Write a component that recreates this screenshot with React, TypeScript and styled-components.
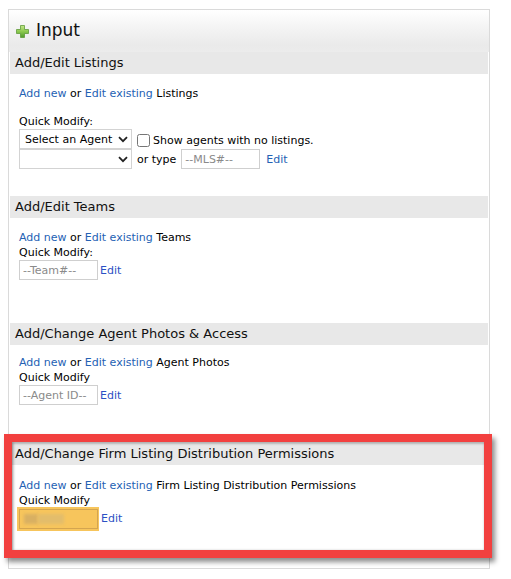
import styled, { createGlobalStyle } from 'styled-components';

const GlobalStyle = createGlobalStyle`
  html, body {
    margin: 0;
    padding: 0;
    background: #ffffff;
  }

  body {
    font-family: 'DejaVu Sans', Verdana, sans-serif;
    font-size: 11px;
    color: #000;
  }
`;

const PlusIcon: React.FC = () => (
  <svg width="13" height="13" viewBox="0 0 13 13">
    <defs>
      <linearGradient id="plusFill" x1="0" y1="0" x2="0" y2="1">
        <stop offset="0" stopColor="#c4e88a" />
        <stop offset="0.5" stopColor="#8cc94f" />
        <stop offset="1" stopColor="#4f9a2c" />
      </linearGradient>
    </defs>
    <path
      d="M4.5 0.5h4v4h4v4h-4v4h-4v-4h-4v-4h4z"
      fill="url(#plusFill)"
      stroke="#5f9b3a"
      strokeWidth="0.8"
    />
  </svg>
);

const App: React.FC = () => {
  return (
    <>
      <GlobalStyle />
      <Page>
        <Panel>
          <TitleBar>
            <PlusIcon />
            <TitleText>Input</TitleText>
          </TitleBar>

          <Section $bottom={27}>
            <SectionHeader>Add/Edit Listings</SectionHeader>
            <SectionBody>
              <Line $gap={13}>
                <Link href="#">Add new</Link> or <Link href="#">Edit existing</Link> Listings
              </Line>
              <Line>Quick Modify:</Line>
              <Row $gap={5}>
                <SelectBox>
                  <Select defaultValue="agent">
                    <option value="agent">Select an Agent</option>
                  </Select>
                  <Chevron />
                </SelectBox>
                <CheckLabel>
                  <input type="checkbox" />
                  Show agents with no listings.
                </CheckLabel>
              </Row>
              <Row $gap={5}>
                <SelectBox>
                  <Select defaultValue="">
                    <option value=""></option>
                  </Select>
                  <Chevron />
                </SelectBox>
                <span>or type</span>
                <TextInput placeholder="--MLS#--" />
                <EditLink href="#" $gap={1}>Edit</EditLink>
              </Row>
            </SectionBody>
          </Section>

          <Section $bottom={43}>
            <SectionHeader>Add/Edit Teams</SectionHeader>
            <SectionBody>
              <Line>
                <Link href="#">Add new</Link> or <Link href="#">Edit existing</Link> Teams
              </Line>
              <Line>Quick Modify:</Line>
              <Row>
                <TextInput placeholder="--Team#--" />
                <EditLink href="#" $strong>Edit</EditLink>
              </Row>
            </SectionBody>
          </Section>

          <Section $bottom={38}>
            <SectionHeader>Add/Change Agent Photos &amp; Access</SectionHeader>
            <SectionBody $top={10}>
              <Line>
                <Link href="#">Add new</Link> or <Link href="#">Edit existing</Link> Agent Photos
              </Line>
              <Line>Quick Modify</Line>
              <Row>
                <TextInput placeholder="--Agent ID--" />
                <EditLink href="#" $strong>Edit</EditLink>
              </Row>
            </SectionBody>
          </Section>

          <Section $bottom={40} $flagged>
            <Callout />
            <SectionHeader>Add/Change Firm Listing Distribution Permissions</SectionHeader>
            <SectionBody $top={13}>
              <Line>
                <Link href="#">Add new</Link> or <Link href="#">Edit existing</Link> Firm Listing
                Distribution Permissions
              </Line>
              <Line>Quick Modify</Line>
              <Row>
                <Redacted>
                  <RedactedField>
                    <Smudge $width={14} $tone="#d9b062" />
                    <Smudge $width={26} $tone="#e3bd6b" />
                  </RedactedField>
                </Redacted>
                <EditLink href="#" $strong>Edit</EditLink>
              </Row>
            </SectionBody>
          </Section>
        </Panel>
      </Page>
    </>
  );
};

const Chevron: React.FC = () => (
  <ChevronMark width="10" height="7" viewBox="0 0 10 7">
    <path d="M1 1.2l4 4 4-4" fill="none" stroke="#222" strokeWidth="1.8" />
  </ChevronMark>
);

const Page = styled.div`
  padding: 9px 0 0 8px;
`;

const Panel = styled.div`
  width: 482px;
  border: 1px solid #dadada;
  box-sizing: border-box;
`;

const TitleBar = styled.div`
  height: 42px;
  display: flex;
  align-items: center;
  gap: 7px;
  padding: 0 0 0 7px;
  box-sizing: border-box;
  background: linear-gradient(to bottom, #ffffff 0%, #f3f3f3 45%, #eaeaea 85%, #ececec 100%);
`;

const TitleText = styled.span`
  font-size: 17px;
  color: #111;
  margin-top: -2px;
`;

const Section = styled.div<{ $bottom: number; $flagged?: boolean }>`
  position: relative;
  padding-bottom: ${(p) => p.$bottom}px;
`;

const SectionHeader = styled.div`
  margin: 0 1px;
  height: 22px;
  line-height: 22px;
  padding-left: 5px;
  background: #e8e8e8;
  font-size: 13px;
  color: #111;
`;

const SectionBody = styled.div<{ $top?: number }>`
  padding: ${(p) => p.$top ?? 12}px 0 0 10px;
`;

const Line = styled.div<{ $gap?: number }>`
  line-height: 15px;
  margin-bottom: ${(p) => p.$gap ?? 0}px;
  white-space: nowrap;
`;

const Link = styled.a`
  color: #2461b4;
  text-decoration: none;
`;

const EditLink = styled.a<{ $gap?: number; $strong?: boolean }>`
  color: ${(p) => (p.$strong ? '#2c50c4' : '#2461b4')};
  text-decoration: none;
  margin-left: ${(p) => p.$gap ?? 2}px;
`;

const Row = styled.div<{ $gap?: number }>`
  display: flex;
  align-items: center;
  height: 20px;
  gap: ${(p) => p.$gap ?? 0}px;

  &:first-of-type {
    margin-top: 1px;
  }
`;

const SelectBox = styled.div`
  position: relative;
  width: 113px;
  height: 20px;
`;

const Select = styled.select`
  appearance: none;
  width: 100%;
  height: 100%;
  margin: 0;
  padding: 0 0 0 5px;
  border: 1px solid #d3d3d3;
  border-radius: 0;
  background: #fff;
  font-family: 'DejaVu Sans', Verdana, sans-serif;
  font-size: 11px;
  color: #000;
`;

const ChevronMark = styled.svg`
  position: absolute;
  right: 4px;
  top: 7px;
  pointer-events: none;
`;

const CheckLabel = styled.label`
  display: flex;
  align-items: center;
  gap: 3px;
  margin-top: 3px;
  white-space: nowrap;

  input {
    width: 13px;
    height: 13px;
    margin: 0;
  }
`;

const TextInput = styled.input`
  width: 79px;
  height: 20px;
  box-sizing: border-box;
  margin: 0;
  padding: 0 3px;
  border: 1px solid #cfcfcf;
  border-radius: 0;
  font-family: 'DejaVu Sans', Verdana, sans-serif;
  font-size: 11px;

  &::placeholder {
    color: #8a8a8a;
  }
`;

const Redacted = styled.span`
  display: inline-flex;
  margin: 2px 0 0 -2px;
  padding: 2px 1px 2px 2px;
  background: #f7c55c;
`;

const RedactedField = styled.span`
  display: flex;
  align-items: center;
  width: 79px;
  height: 20px;
  box-sizing: border-box;
  padding-left: 4px;
  border: 1px solid #d4a550;
`;

const Smudge = styled.span<{ $width: number; $tone: string }>`
  width: ${(p) => p.$width}px;
  height: 10px;
  background: ${(p) => p.$tone};
  filter: blur(1.5px);
`;

const Callout = styled.div`
  position: absolute;
  top: -9px;
  left: -5px;
  width: 488px;
  height: 124px;
  box-sizing: border-box;
  border: 8px solid #f2403f;
  box-shadow: 3px 4px 5px rgba(0, 0, 0, 0.45), inset 1px 1px 3px rgba(0, 0, 0, 0.45);
  pointer-events: none;
  z-index: 2;
`;

export default App;
